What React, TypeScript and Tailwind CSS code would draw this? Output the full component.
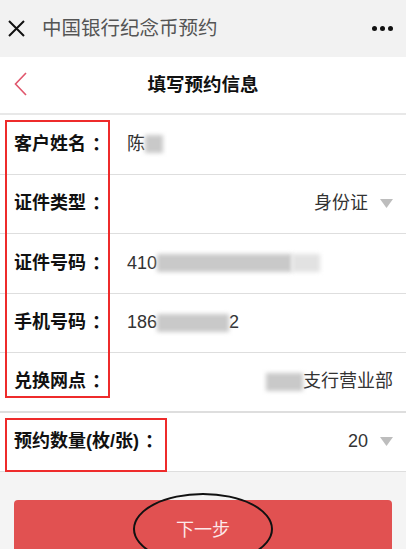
import React from "react";

const font = { fontFamily: '"Liberation Sans", "Noto Sans CJK SC", sans-serif' };

const Blur = ({ w, tone = "bg-[#c9c9c9]" }: { w: number; tone?: string }) => (
  <span
    className={`inline-block h-[18px] ${tone} blur-[2px] align-middle`}
    style={{ width: w }}
  />
);

const Caret = () => (
  <svg width="13" height="9" viewBox="0 0 13 9" className="ml-[12px]">
    <path d="M0 0H13L6.5 9Z" fill="#bdbdbd" />
  </svg>
);

const Row = ({
  label,
  children,
  right,
  thick,
}: {
  label: string;
  children?: React.ReactNode;
  right?: boolean;
  thick?: boolean;
}) => (
  <div
    className={`h-[59.5px] flex items-center bg-white border-[#dedede] pl-[14px] pr-[13px] ${
      thick ? "border-b-[2px]" : "border-b"
    }`}
  >
    <span className="text-[18px] font-bold text-[#111] whitespace-nowrap">
      {label}
      <span className="ml-[6px]">：</span>
    </span>
    <div className={`flex-1 flex items-center text-[18px] text-[#333] ${right ? "justify-end" : "pl-[17px]"}`}>
      {children}
    </div>
  </div>
);

export default function App() {
  return (
    <div className="relative w-[406px] h-[549px] overflow-hidden bg-[#f4f4f4]" style={font}>
      {/* wechat top bar */}
      <div className="h-[57px] bg-[#f2f2f2] flex items-center pl-[8px] pr-[13px]">
        <svg width="17" height="17" viewBox="0 0 17 17">
          <path d="M1 1L16 16M16 1L1 16" stroke="#111" strokeWidth="2" />
        </svg>
        <span className="ml-[17px] text-[19.5px] text-[#555]">中国银行纪念币预约</span>
        <div className="ml-auto flex gap-[3px]">
          <span className="w-[5px] h-[5px] rounded-full bg-[#111]" />
          <span className="w-[5px] h-[5px] rounded-full bg-[#111]" />
          <span className="w-[5px] h-[5px] rounded-full bg-[#111]" />
        </div>
      </div>

      {/* page nav */}
      <div className="relative h-[58px] bg-white flex items-center justify-center border-b-[2px] border-[#e8e8e8]">
        <svg width="13" height="24" viewBox="0 0 13 24" className="absolute left-[14px] top-[15px]">
          <path d="M12 1L1.5 12L12 23" fill="none" stroke="#e0566c" strokeWidth="1.6" />
        </svg>
        <span className="text-[18.5px] font-bold text-[#111]">填写预约信息</span>
      </div>

      <Row label="客户姓名">
        <span>陈</span>
        <Blur w={18} />
      </Row>
      <Row label="证件类型" right>
        <span>身份证</span>
        <Caret />
      </Row>
      <Row label="证件号码">
        <span>410</span>
        <Blur w={135} />
        <Blur w={28} tone="bg-[#e2e2e2]" />
      </Row>
      <Row label="手机号码">
        <span>186</span>
        <Blur w={72} />
        <span>2</span>
      </Row>
      <Row label="兑换网点" right thick>
        <Blur w={37} />
        <span>支行营业部</span>
      </Row>
      <Row label="预约数量(枚/张)" right>
        <span>20</span>
        <Caret />
      </Row>

      <div className="px-[14px] pt-[28px]">
        <button className="w-full h-[60px] rounded-[4px] bg-[#e15151] text-[18px] text-[#fde8ea] flex items-center justify-center">
          下一步
        </button>
      </div>

      {/* annotation marks */}
      <div className="absolute left-[5px] top-[120px] w-[105px] h-[278px] border-[2px] border-[#ee2b2b]" />
      <div className="absolute left-[5px] top-[418px] w-[162px] h-[54px] border-[2px] border-[#ee2b2b]" />
      <div className="absolute left-[133px] top-[493px] w-[140px] h-[72px] rounded-[50%] border-[2px] border-[#111]" />
    </div>
  );
}
